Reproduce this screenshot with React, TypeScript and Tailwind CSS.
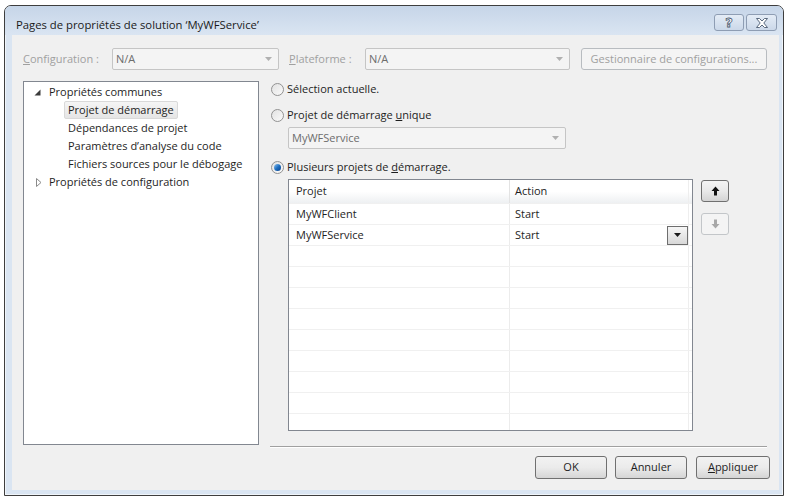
import React from 'react';

const font = { fontFamily: '"Open Sans", "Noto Sans", sans-serif' };

function Arrow({ color = '#a0a0a0' }: { color?: string }) {
  return (
    <svg width="7" height="4" viewBox="0 0 7 4">
      <path d="M0 0 L7 0 L3.5 4 Z" fill={color} />
    </svg>
  );
}

function Combo({ value, width }: { value: string; width: string }) {
  return (
    <div
      className={`${width} h-[22px] flex items-center justify-between pl-[3px] pr-[6px] border border-[#c5c5c5] rounded-[2px] bg-[#f4f4f4] text-[#6d6d6d]`}
    >
      <span>{value}</span>
      <Arrow color="#b0b0b0" />
    </div>
  );
}

function Radio({ checked }: { checked?: boolean }) {
  return (
    <div className="w-[13px] h-[13px] rounded-full border border-[#929292] bg-gradient-to-br from-[#e2e2e2] to-[#fafafa] flex items-center justify-center shrink-0">
      {checked && (
        <div className="w-[7px] h-[7px] rounded-full bg-gradient-to-br from-[#8ac3ef] via-[#1e6fc0] to-[#0b3f8a]" />
      )}
    </div>
  );
}

function TreeChild({ label, selected }: { label: string; selected?: boolean }) {
  return (
    <div className="h-[18px] flex items-center pl-[40px]">
      <span
        className={`h-[18px] flex items-center px-[3px] rounded-[2px] border ${
          selected ? 'border-[#d9d9d9] bg-gradient-to-b from-[#f5f5f5] to-[#e5e5e5]' : 'border-transparent'
        }`}
      >
        {label}
      </span>
    </div>
  );
}

const rows = [
  { projet: 'MyWFClient', action: 'Start' },
  { projet: 'MyWFService', action: 'Start', combo: true },
  ...Array.from({ length: 9 }, () => ({ projet: '', action: '' })),
];

export default function App() {
  return (
    <div className="w-[792px] h-[500px] bg-white pt-[5px] pl-[4px] text-[11px] text-[#1e1e1e]" style={font}>
      <div className="w-[780px] h-[491px] border border-[#3e3e3e] rounded-t-[7px] bg-[#dae5f2] flex flex-col shadow-[inset_0_0_0_1px_rgba(255,255,255,0.6)]">
        {/* Title bar */}
        <div className="h-[29px] flex items-start justify-between pl-[11px] pr-[6px] rounded-t-[6px] bg-gradient-to-b from-[#c6d5e8] to-[#dae5f2]">
          <span className="mt-[11px] text-[11.3px] leading-[16px] text-[#1a1a1a]">
            Pages de propriétés de solution ‘MyWFService’
          </span>
          <div className="mt-[8px] flex gap-[2px]">
            <div className="w-[30px] h-[17px] rounded-[3px] border border-[#8e9db3] bg-gradient-to-b from-[#e4ecf6] to-[#cbd8e9] flex items-center justify-center">
              <span className="text-[13px] leading-none font-bold text-white [-webkit-text-stroke:0.8px_#4a5a70]" style={{ fontFamily: '"DejaVu Sans", sans-serif' }}>
                ?
              </span>
            </div>
            <div className="w-[31px] h-[17px] rounded-[3px] border border-[#8e9db3] bg-gradient-to-b from-[#e4ecf6] to-[#cbd8e9] flex items-center justify-center">
              <svg width="14" height="10" viewBox="0 0 14 10">
                <path
                  d="M1.5 0.5 H4.5 L7 3 L9.5 0.5 H12.5 L8.8 5 L12.5 9.5 H9.5 L7 7 L4.5 9.5 H1.5 L5.2 5 Z"
                  fill="#ffffff"
                  stroke="#4a5a70"
                  strokeWidth="0.9"
                  strokeLinejoin="round"
                />
              </svg>
            </div>
          </div>
        </div>

        {/* Body */}
        <div className="flex-1 ml-[7px] mr-[4px] mb-[5px] bg-[#f0f0f0] flex flex-col pl-[11px] pt-[13px]">
          {/* Configuration row */}
          <div className="h-[22px] flex items-center">
            <span className="w-[89px] text-[#a0a0a0]">
              <span className="underline">C</span>onfiguration :
            </span>
            <Combo value="N/A" width="w-[167px]" />
            <span className="ml-[10px] w-[76px] text-[#a0a0a0]">
              <span className="underline">P</span>lateforme :
            </span>
            <Combo value="N/A" width="w-[205px]" />
            <div className="ml-[11px] w-[186px] h-[22px] border border-[#b8bcc0] rounded-[3px] bg-[#f4f4f4] text-[#a0a0a0] flex items-center justify-center">
              Gestionnaire de configurations...
            </div>
          </div>

          {/* Main row */}
          <div className="mt-[11px] flex">
            {/* Tree */}
            <div className="w-[236px] h-[364px] border border-[#828790] bg-white pt-[1px]">
              <div className="h-[18px] flex items-center pl-[10px]">
                <svg width="7" height="7" viewBox="0 0 7 7" className="mr-[8px]">
                  <path d="M6.5 0.5 L6.5 6.5 L0.5 6.5 Z" fill="#3c3c3c" />
                </svg>
                <span>Propriétés communes</span>
              </div>
              <TreeChild label="Projet de démarrage" selected />
              <TreeChild label="Dépendances de projet" />
              <TreeChild label="Paramètres d’analyse du code" />
              <TreeChild label="Fichiers sources pour le débogage" />
              <div className="h-[18px] flex items-center pl-[12px]">
                <svg width="6" height="9" viewBox="0 0 6 9" className="mr-[7px]">
                  <path d="M0.5 0.5 L5 4.5 L0.5 8.5 Z" fill="none" stroke="#8a8a8a" strokeWidth="1" />
                </svg>
                <span>Propriétés de configuration</span>
              </div>
            </div>

            {/* Right column */}
            <div className="ml-[12px] flex flex-col">
              <div className="h-[16px] flex items-center gap-[3px]">
                <Radio />
                <span>Sélection actuelle.</span>
              </div>
              <div className="mt-[10px] h-[16px] flex items-center gap-[3px]">
                <Radio />
                <span>
                  Projet de démarrage <span className="underline">u</span>nique
                </span>
              </div>
              <div className="mt-[4px] ml-[17px]">
                <Combo value="MyWFService" width="w-[278px]" />
              </div>
              <div className="mt-[10px] h-[16px] flex items-center gap-[3px]">
                <Radio checked />
                <span>
                  Plusieurs projets de <span className="underline">d</span>émarrage.
                </span>
              </div>

              <div className="mt-[4px] ml-[17px] flex">
                {/* Grid */}
                <div className="w-[405px] h-[252px] border border-[#828790] bg-white overflow-hidden">
                  <div className="h-[24px] flex border-b border-[#f0f0f0] bg-gradient-to-b from-white via-white to-[#eef0f2]">
                    <div className="w-[221px] pl-[7px] flex items-center border-r border-[#e3e3e3]">Projet</div>
                    <div className="w-[179px] pl-[5px] flex items-center border-r border-[#eeeeee]">Action</div>
                  </div>
                  {rows.map((r, i) => (
                    <div key={i} className="h-[21px] flex border-b border-[#f0f0f0]">
                      <div className="w-[221px] pl-[7px] flex items-center border-r border-[#ececec]">{r.projet}</div>
                      <div className="w-[179px] pl-[5px] flex items-center justify-between border-r border-[#eeeeee]">
                        <span>{r.action}</span>
                        {r.combo && (
                          <div className="w-[21px] h-[19px] border border-[#6e6e6e] bg-gradient-to-b from-[#f6f6f6] to-[#d8d8d8] flex items-center justify-center">
                            <Arrow color="#1a1a1a" />
                          </div>
                        )}
                      </div>
                    </div>
                  ))}
                </div>

                {/* Up / down */}
                <div className="ml-[8px] flex flex-col">
                  <div className="mt-[1px] w-[28px] h-[22px] border border-[#707070] rounded-[3px] bg-gradient-to-b from-[#f4f4f4] via-[#e9e9e9] to-[#d4d4d4] flex items-center justify-center">
                    <svg width="9" height="10" viewBox="0 0 9 10">
                      <path d="M4.5 0.5 L8.5 5 H6 V9.5 H3 V5 H0.5 Z" fill="#111" />
                    </svg>
                  </div>
                  <div className="mt-[11px] w-[28px] h-[22px] border border-[#c3c6c9] rounded-[3px] bg-[#f4f4f4] flex items-center justify-center">
                    <svg width="9" height="10" viewBox="0 0 9 10">
                      <path d="M4.5 9.5 L8.5 5 H6 V0.5 H3 V5 H0.5 Z" fill="#a8a8a8" />
                    </svg>
                  </div>
                </div>
              </div>

              <div className="mt-[15px] -ml-[1px] w-[497px] h-[1px] bg-[#a0a0a0] border-b border-white box-content" />
            </div>
          </div>

          {/* Buttons */}
          <div className="mt-[8px] flex justify-end pr-[9px] gap-[8px]">
            {['OK', 'Annuler'].map((l) => (
              <div
                key={l}
                className="w-[72px] h-[23px] border border-[#707070] rounded-[3px] bg-gradient-to-b from-[#f2f2f2] via-[#ebebeb] to-[#d5d5d5] flex items-center justify-center"
              >
                {l}
              </div>
            ))}
            <div className="ml-[1px] w-[74px] h-[23px] border border-[#707070] rounded-[3px] bg-gradient-to-b from-[#f2f2f2] via-[#ebebeb] to-[#d5d5d5] flex items-center justify-center">
              <span>
                <span className="underline">A</span>ppliquer
              </span>
            </div>
          </div>
        </div>
      </div>
    </div>
  );
}
